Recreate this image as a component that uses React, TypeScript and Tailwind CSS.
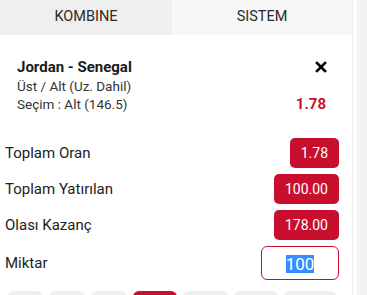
import { useState } from "react";

const rows = [
  { label: "Toplam Oran", value: "1.78" },
  { label: "Toplam Yatırılan", value: "100.00" },
  { label: "Olası Kazanç", value: "178.00" },
];

// only the top edge of the quick amount buttons is in view
const quickAmounts = [
  { v: "10", w: "w-[35px]" },
  { v: "20", w: "w-[36px]" },
  { v: "50", w: "w-[36px]" },
  { v: "100", w: "w-[44px]" },
  { v: "200", w: "w-[45px]" },
  { v: "500", w: "w-[44px]" },
  { v: "1000", w: "w-[52px]" },
];

const App = () => {
  const [tab, setTab] = useState<"kombine" | "sistem">("kombine");

  return (
    <div
      className="flex h-[295px] w-full overflow-hidden bg-white text-[#222]"
      style={{ fontFamily: "Roboto, 'Liberation Sans', sans-serif" }}
    >
      <div className="flex w-[353px] shrink-0 flex-col border-r border-[#ececec]">
        {/* Tabs */}
        <div className="flex h-[35px] shrink-0 text-[14.5px] text-[#2a2a2a]">
          <button
            onClick={() => setTab("kombine")}
            className={`flex w-[172px] items-center justify-center pb-[1px] ${tab === "kombine" ? "bg-[#efefef]" : "bg-[#f7f7f7]"}`}
          >
            KOMBINE
          </button>
          <button
            onClick={() => setTab("sistem")}
            className={`flex flex-1 items-center justify-center pb-[1px] ${tab === "sistem" ? "bg-[#efefef]" : "bg-[#f7f7f7]"}`}
          >
            SISTEM
          </button>
        </div>

        {/* Selected match */}
        <div className="pl-[17px] pr-[26px] pt-[22px]">
          <div className="flex items-center justify-between">
            <span className="text-[15px] font-bold leading-[20px] text-[#1a1a1a]">Jordan - Senegal</span>
            <svg width="12" height="12" viewBox="0 0 12 12" className="mr-[-1px]">
              <path d="M2 2L10 10M10 2L2 10" stroke="#000" strokeWidth="2.6" strokeLinecap="square" />
            </svg>
          </div>
          <div className="text-[13.5px] leading-[18px] text-[#333]">Üst / Alt (Uz. Dahil)</div>
          <div className="flex items-center justify-between text-[13.5px] leading-[18px] text-[#333]">
            <span>Seçim : Alt (146.5)</span>
            <span className="text-[15px] font-bold text-[#c8102e]">1.78</span>
          </div>
        </div>

        {/* Totals */}
        <div className="mt-[25px] flex flex-col gap-[6px] pl-[5px] pr-[13px]">
          {rows.map((r) => (
            <div key={r.label} className="flex h-[30px] items-center justify-between">
              <span className="text-[15px] text-[#222]">{r.label}</span>
              <span className="rounded-[5px] bg-[#c8102e] px-[11px] text-[14px] leading-[30px] text-white">
                {r.value}
              </span>
            </div>
          ))}
          <div className="flex h-[34px] items-center justify-between">
            <span className="text-[15px] text-[#222]">Miktar</span>
            <div className="flex h-[34px] w-[78px] items-center justify-center rounded-[6px] border border-[#c8102e] bg-white pt-[2px]">
              <span className="bg-[#338fff] text-[17px] leading-[18px] text-white">100</span>
            </div>
          </div>
        </div>

        {/* Quick amounts */}
        <div className="mt-[11px] flex gap-[6px] pl-[8px]">
          {quickAmounts.map((q) => (
            <button
              key={q.v}
              aria-label={q.v}
              className={`${q.w} h-[30px] shrink-0 rounded-[6px] ${q.v === "100" ? "bg-[#c8102e]" : "bg-[#efefef]"}`}
            />
          ))}
        </div>
      </div>
      <div className="w-[4px] shrink-0 bg-white" />
      <div className="flex-1 bg-[#f2f2f2]" />
    </div>
  );
};

export default App;
